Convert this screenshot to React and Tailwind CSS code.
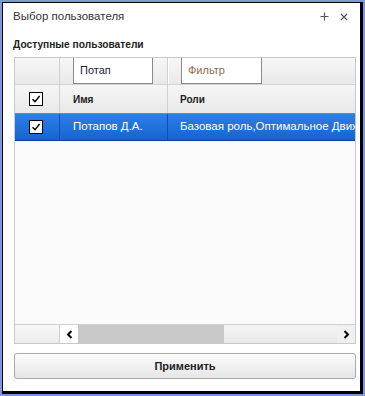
import React from 'react';

const font = { fontFamily: '"Liberation Sans", Arial, sans-serif' };

function Check() {
  return (
    <div className="w-[14px] h-[14px] bg-white border-[1.5px] border-black flex items-center justify-center">
      <svg width="10" height="10" viewBox="0 0 10 10">
        <path d="M1.5 5.2 L4 7.6 L8.6 2" fill="none" stroke="#000" strokeWidth="1.4" />
      </svg>
    </div>
  );
}

export default function App() {
  return (
    <div className="w-[365px] h-[396px] bg-[#7d98da] p-[2px]" style={font}>
      <div className="h-full flex flex-col bg-white border-l border-t border-black border-r-[3px] border-b-[3px] pl-[10px] pr-[4px]">
        {/* заголовок */}
        <div className="h-[27px] flex items-center justify-between text-[11.5px] text-[#333]">
          <span>Выбор пользователя</span>
          <div className="flex items-center gap-[11px] pr-[8px] text-[#666]">
            <svg width="9" height="9" viewBox="0 0 9 9">
              <path d="M4.5 0.5 V8.5 M0.5 4.5 H8.5" stroke="#555" strokeWidth="1.2" />
            </svg>
            <svg width="8" height="8" viewBox="0 0 8 8">
              <path d="M1 1 L7 7 M7 1 L1 7" stroke="#555" strokeWidth="1.2" />
            </svg>
          </div>
        </div>

        <div className="mt-[7px] h-[16px] flex items-center text-[10.2px] font-bold text-[#222]">
          Доступные пользователи
        </div>

        {/* таблица */}
        <div className="mt-[4px] ml-[1px] h-[287px] flex flex-col border border-[#c9c9c9] bg-[#fafafa] overflow-hidden">
          {/* фильтры */}
          <div className="h-[27px] flex bg-gradient-to-b from-[#f7f7f7] to-[#e9e9e9] border-b border-[#d4d4d4]">
            <div className="w-[45px] border-r border-[#d0d0d0]" />
            <div className="w-[108px] flex items-end pl-[13px] border-r border-[#d0d0d0]">
              <div className="w-[80px] h-[27px] bg-white border border-[#8a8a8a] flex items-center pl-[6px] text-[11px] text-[#1a1a40]">
                Потап
              </div>
            </div>
            <div className="flex-1 flex items-end pl-[12px] border-l border-white">
              <div className="w-[81px] h-[27px] bg-white border border-[#8a8a8a] flex items-center pl-[6px] text-[11px] text-[#8a6e55]">
                Фильтр
              </div>
            </div>
          </div>

          {/* шапка */}
          <div className="h-[28px] flex bg-gradient-to-b from-[#f6f6f6] to-[#e8e8e8] text-[10px] font-bold text-[#222]">
            <div className="w-[45px] flex items-center justify-center border-r border-[#d0d0d0] pr-[2px]">
              <Check />
            </div>
            <div className="w-[108px] flex items-center pl-[13px] border-r border-[#d0d0d0]">Имя</div>
            <div className="flex-1 flex items-center pl-[12px]">Роли</div>
          </div>

          {/* выбранная строка */}
          <div className="h-[28px] flex bg-gradient-to-b from-[#2b80e6] to-[#1664cf] border-t border-[#4a8fe0] border-b border-b-[#0b3e9a] text-[11.5px] text-white whitespace-nowrap">
            <div className="w-[45px] flex items-center justify-center border-r border-[#0e4fb0] pr-[2px]">
              <Check />
            </div>
            <div className="w-[108px] flex items-center pl-[13px] border-r border-[#0e4fb0]">Потапов Д.А.</div>
            <div className="flex-1 flex items-center pl-[12px] overflow-hidden">
              Базовая роль,Оптимальное Движение
            </div>
          </div>

          <div className="flex-1" />

          {/* прокрутка */}
          <div className="h-[19px] flex border-t border-[#d0d0d0] bg-[#efefef]">
            <div className="w-[45px] bg-gradient-to-b from-[#f7f7f7] to-[#ececec] border-r border-[#cfcfcf]" />
            <div className="w-[18px] flex items-center justify-center bg-white">
              <svg width="7" height="9" viewBox="0 0 7 9">
                <path d="M5.5 1 L2 4.5 L5.5 8" fill="none" stroke="#000" strokeWidth="2" />
              </svg>
            </div>
            <div className="w-[146px] bg-[#c8c8c8]" />
            <div className="flex-1 bg-gradient-to-b from-[#f4f4f4] to-[#e9e9e9]" />
            <div className="w-[18px] flex items-center justify-center bg-[#f0f0f0]">
              <svg width="7" height="9" viewBox="0 0 7 9">
                <path d="M1.5 1 L5 4.5 L1.5 8" fill="none" stroke="#000" strokeWidth="2" />
              </svg>
            </div>
          </div>
        </div>

        {/* кнопка */}
        <button className="mt-[9px] ml-[1px] h-[26px] rounded-[3px] border border-[#a9a9a9] bg-gradient-to-b from-[#fbfbfb] to-[#e6e6e6] text-[11px] font-bold text-[#222]" style={font}>
          Применить
        </button>
      </div>
    </div>
  );
}
